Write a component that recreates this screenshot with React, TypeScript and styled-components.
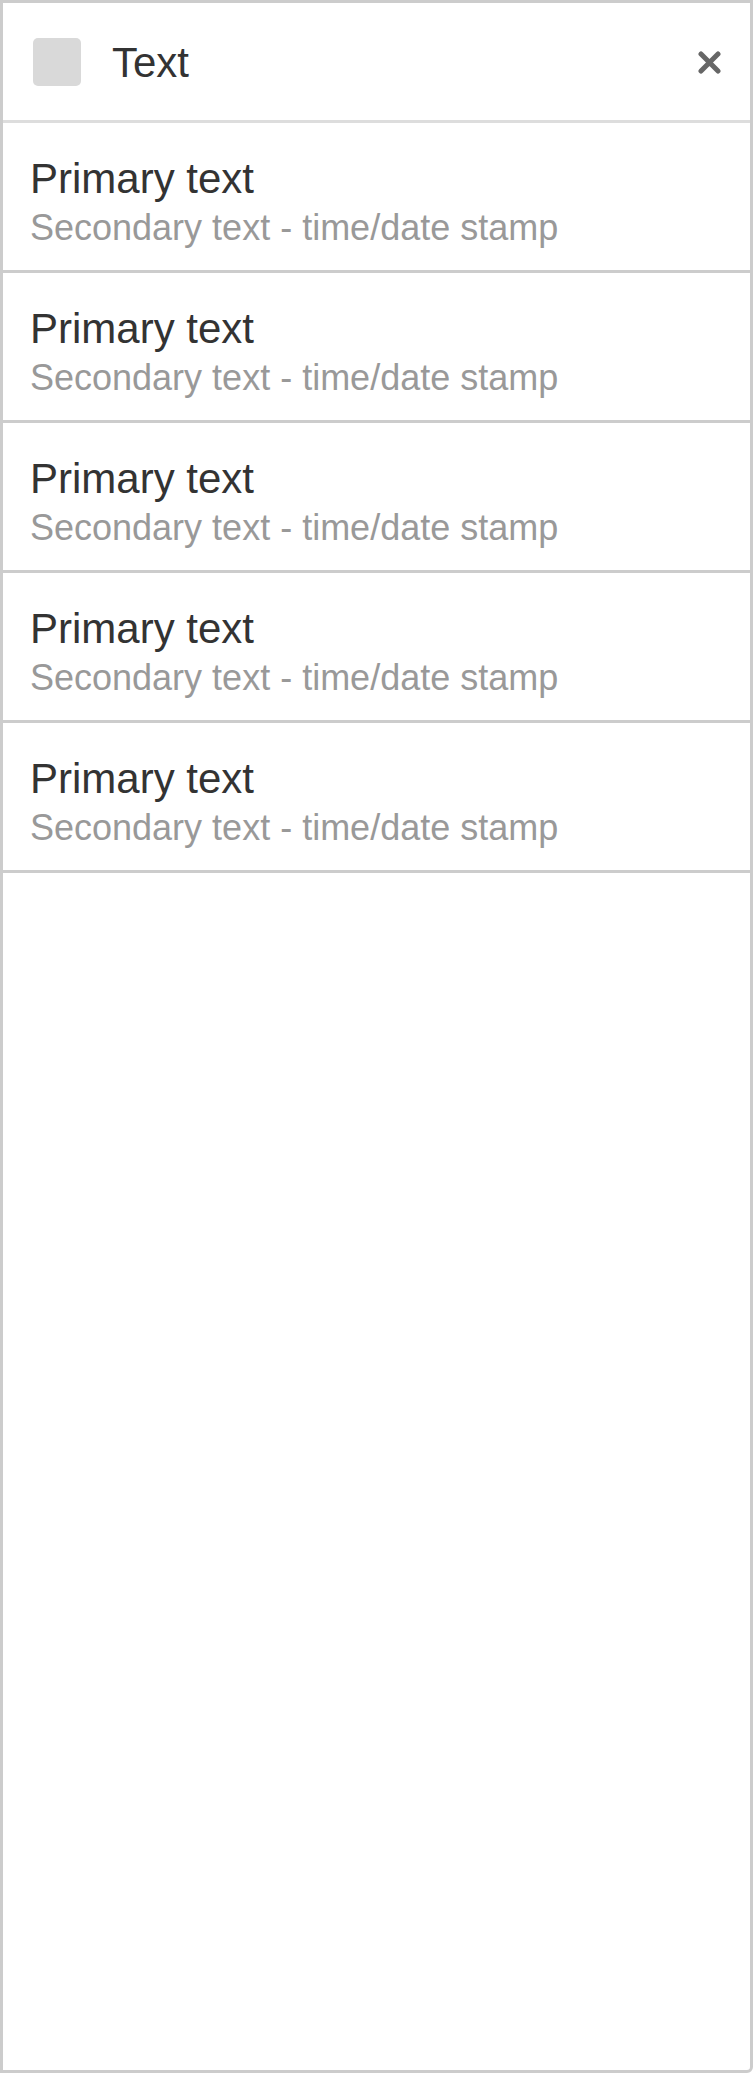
import * as React from 'react';
import styled, { createGlobalStyle } from 'styled-components';

const Global = createGlobalStyle`
	html, body {
		margin: 0;
		padding: 0;
		background: #fff;
	}
	* {
		box-sizing: border-box;
	}
`;

// The whole panel, framed by a grey border
const Panel = styled.div`
	width: 753px;
	height: 2073px;
	border: 3px solid #ccc;
	border-bottom-right-radius: 6px;
	background: #fff;
	font-family: "Liberation Sans", Arial, sans-serif;
	display: flex;
	flex-direction: column;
`;

const Header = styled.div`
	height: 120px;
	flex: none;
	display: flex;
	align-items: center;
	padding: 2px 25px 0 30px;
	border-bottom: 3px solid #ddd;
`;

const Avatar = styled.div`
	width: 48px;
	height: 48px;
	border-radius: 5px;
	background: #d9d9d9;
	margin: -2px 31px 0 0;
	flex: none;
`;

const Title = styled.div`
	flex: 1;
	font-size: 42px;
	color: #333;
	line-height: 48px;
`;

const Close = styled.button`
	width: 32px;
	height: 32px;
	padding: 0;
	border: none;
	background: none;
	display: flex;
	align-items: center;
	justify-content: center;
	cursor: pointer;
`;

const List = styled.ul`
	list-style: none;
	margin: 0;
	padding: 0;
`;

const Row = styled.li`
	padding: 33.5px 26px 24.5px 27px;
	border-bottom: 3px solid #ccc;
`;

const Primary = styled.div`
	font-size: 42px;
	line-height: 44px;
	color: #333;
`;

const Secondary = styled.div`
	font-size: 36px;
	line-height: 36px;
	margin-top: 9px;
	color: #999;
`;

const items = [1, 2, 3, 4, 5];

export default function App() {
	return (
		<>
			<Global />
			<Panel>
				<Header>
					<Avatar />
					<Title>Text</Title>
					<Close aria-label="Close">
						<svg width="23" height="23" viewBox="0 0 23 23">
							<path d="M3 3 L20 20 M20 3 L3 20" stroke="#666" strokeWidth="5" strokeLinecap="round" />
						</svg>
					</Close>
				</Header>
				<List>
					{items.map(i => (
						<Row key={i}>
							<Primary>Primary text</Primary>
							<Secondary>Secondary text - time/date stamp</Secondary>
						</Row>
					))}
				</List>
			</Panel>
		</>
	);
}
